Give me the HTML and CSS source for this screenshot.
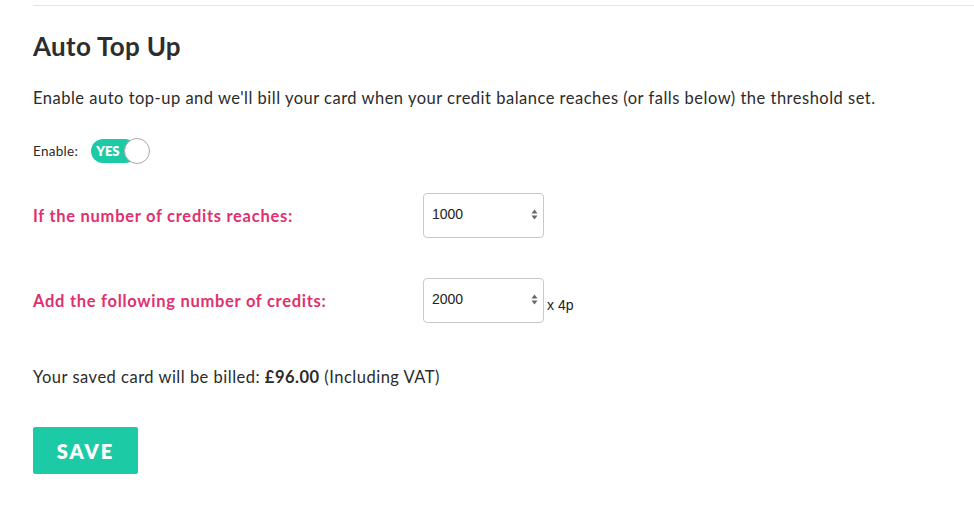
FILE: index.html
```html
<!DOCTYPE html>
<html>
<head>
<meta charset="utf-8">
<link rel="stylesheet" href="styles.css">
</head>
<body>
<div class="page">
  <hr class="rule">
  <h2 class="title">Auto Top Up</h2>
  <p class="intro">Enable auto top-up and we'll bill your card when your credit balance reaches (or falls below) the threshold set.</p>
  <div class="enable">
    <span class="enable-label">Enable:</span>
    <span class="toggle"><span class="toggle-text">YES</span><span class="knob"></span></span>
  </div>
  <div class="field">
    <label class="field-label">If the number of credits reaches:</label>
    <div class="select"><span>1000</span><span class="arrows"><svg width="7" height="11" viewBox="0 0 7 11"><path d="M3.5 0.5 L6.5 4.5 H0.5 Z" fill="#666"/><path d="M3.5 10.5 L6.5 6.5 H0.5 Z" fill="#666"/></svg></span></div>
  </div>
  <div class="field field-second">
    <label class="field-label">Add the following number of credits:</label>
    <div class="select"><span>2000</span><span class="arrows"><svg width="7" height="11" viewBox="0 0 7 11"><path d="M3.5 0.5 L6.5 4.5 H0.5 Z" fill="#666"/><path d="M3.5 10.5 L6.5 6.5 H0.5 Z" fill="#666"/></svg></span></div>
    <span class="unit">x 4p</span>
  </div>
  <p class="billed">Your saved card will be billed: <strong>£96.00</strong> (Including VAT)</p>
  <button class="save">SAVE</button>
</div>
</body>
</html>
```
FILE: styles.css
```css
html, body { margin: 0; padding: 0; background: #fff; }
body { font-family: Lato, "Open Sans", sans-serif; color: #2b2b2b; }
.page { padding: 5px 0 0 33px; }
.rule { border: 0; border-top: 1px solid #e5e5e5; margin: 0; }
.title { font-size: 26px; font-weight: 700; margin: 25px 0 0; line-height: 30px; color: #2d2d2d; letter-spacing: 0.3px; }
.intro { font-size: 16.5px; margin: 27px 0 0; line-height: 20px; letter-spacing: 0.5px; }
.enable { display: flex; align-items: center; margin-top: 30px; height: 26px; }
.enable-label { font-size: 13.5px; margin-right: 13px; letter-spacing: 0.3px; }
.toggle { position: relative; width: 59px; height: 26px; display: inline-block; }
.toggle::before { content: ""; position: absolute; left: 0; top: 1px; width: 46px; height: 24px; background: #1ccba5; border-radius: 12px; }
.toggle-text { position: relative; color: #fff; font-weight: 800; font-size: 13px; line-height: 26px; padding-left: 5px; }
.knob { position: absolute; right: 0; top: 0; width: 24px; height: 24px; border-radius: 50%; background: #fff; border: 1px solid #aaa; }
.field { display: flex; align-items: center; margin-top: 29px; }
.field-second { margin-top: 40px; }
.field-label { width: 390px; font-size: 16.5px; font-weight: 700; color: #e0306f; letter-spacing: 0.72px; }
.select { box-sizing: border-box; width: 121px; height: 45px; border: 1px solid #c9c9c9; border-radius: 4px; display: flex; align-items: center; justify-content: space-between; padding: 0 5px 0 8px; font-size: 14px; color: #222; font-family: "Liberation Sans", Arial, sans-serif; padding-bottom: 3px; }
.arrows { display: flex; }
.unit { font-size: 14px; margin-left: 3px; margin-top: 8px; font-family: "Liberation Sans", Arial, sans-serif; color: #222; }
.billed { font-size: 16.5px; margin: 44px 0 0; line-height: 20px; letter-spacing: 0.5px; }
.billed strong { font-weight: 700; }
.save { margin-top: 40px; width: 105px; height: 47px; border: 0; border-radius: 2px; background: #1ccba5; color: #fff; font-family: Lato, sans-serif; font-weight: 800; font-size: 20px; letter-spacing: 2px; padding: 0; }
```
